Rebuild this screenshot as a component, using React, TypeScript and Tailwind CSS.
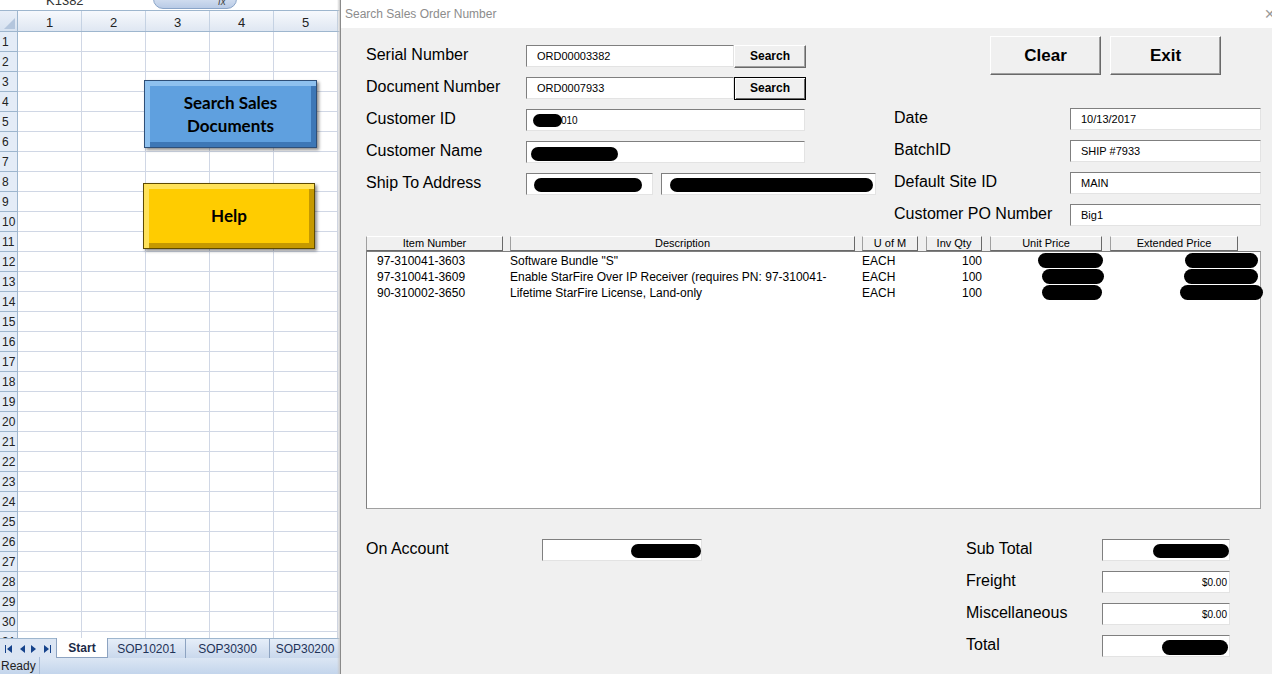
import React from "react";

const rowNums = Array.from({ length: 31 }, (_, i) => i + 1);
const colNums = [1, 2, 3, 4, 5];

// unit / ext = [left offset inside column, blob width]
const lineItems = [
  { item: "97-310041-3603", desc: 'Software Bundle "S"', uom: "EACH", qty: "100", unit: [56, 65], ext: [83, 73] },
  { item: "97-310041-3609", desc: "Enable StarFire Over IP Receiver (requires PN: 97-310041-", uom: "EACH", qty: "100", unit: [60, 62], ext: [82, 74] },
  { item: "90-310002-3650", desc: "Lifetime StarFire License, Land-only", uom: "EACH", qty: "100", unit: [60, 60], ext: [78, 83] },
];

const Blob = ({ w, h = 14, className = "", left }: { w: number; h?: number; className?: string; left?: number }) => (
  <span className={`inline-block rounded-full bg-black ${className}`} style={{ width: w, height: h, left }} />
);

const Field = ({ w, children, right }: { w: number; children?: React.ReactNode; right?: boolean }) => (
  <div
    className={`flex h-[22px] shrink-0 items-center overflow-hidden border border-t-[#7f7f7f] border-l-[#7f7f7f] border-r-[#e3e3e3] border-b-[#e3e3e3] bg-white text-[11px] text-black ${right ? "justify-end pr-[2px]" : "pl-[10px]"}`}
    style={{ width: w }}
  >
    {children}
  </div>
);

const WinButton = ({ w, h, children, focused, className = "" }: { w: number; h: number; children: React.ReactNode; focused?: boolean; className?: string }) => (
  <div
    className={`flex shrink-0 items-center justify-center bg-[#f0f0f0] font-bold text-black ${focused ? "border border-black shadow-[inset_1px_1px_0_#fff,inset_-1px_-1px_0_#696969]" : "border border-t-white border-l-white border-r-[#696969] border-b-[#696969] shadow-[inset_-1px_-1px_0_#a0a0a0]"} ${className}`}
    style={{ width: w, height: h }}
  >
    {children}
  </div>
);

const Label = ({ w, children }: { w: number; children: React.ReactNode }) => (
  <div className="shrink-0 -mt-[2px] text-[16px] text-black" style={{ width: w }}>
    {children}
  </div>
);

const ColHead = ({ w, children }: { w: number; children: React.ReactNode }) => (
  <div
    className="flex h-[15px] shrink-0 items-center justify-center border border-t-white border-l-[#a0a0a0] border-r-[#696969] border-b-[#696969] bg-[#f0f0f0] text-[11px] leading-none text-black"
    style={{ width: w }}
  >
    {children}
  </div>
);

function ExcelSide() {
  return (
    <div className="relative flex h-full w-[340px] shrink-0 flex-col bg-white font-['Liberation_Sans',sans-serif]">
      {/* formula bar, mostly scrolled off the top */}
      <div className="relative h-[11px] overflow-hidden border-b border-[#9eb6ce] bg-white">
        <span className="absolute left-[46px] -top-[9px] text-[13px] text-[#333]">K1382</span>
        <div className="absolute left-[153px] -top-[10px] h-[19px] w-[84px] rounded-b-[10px] border border-[#8ba5c8] bg-gradient-to-b from-[#e8eef8] to-[#b9cbe6]" />
        <span className="absolute left-[218px] -top-[6px] text-[10px] italic text-[#444]">fx</span>
      </div>
      {/* column header */}
      <div className="flex h-[21px] border-b border-[#9eb6ce]">
        <div className="relative w-[18px] shrink-0 border-r border-[#9eb6ce] bg-gradient-to-b from-[#e9eff8] to-[#d7e2f0]">
          <svg className="absolute bottom-[2px] right-[2px]" width="11" height="11" viewBox="0 0 11 11">
            <path d="M11 0 L11 11 L0 11 Z" fill="#b4c6dd" />
          </svg>
        </div>
        {colNums.map((c) => (
          <div key={c} className="flex w-[64px] shrink-0 items-center justify-center border-r border-[#c5d2e3] bg-gradient-to-b from-[#f7f9fd] to-[#dfe7f2] pt-[3px] text-[13px] text-[#222]">
            {c}
          </div>
        ))}
      </div>
      {/* grid */}
      <div className="relative flex-1 overflow-hidden">
        {rowNums.map((r) => (
          <div key={r} className="flex h-[20px]">
            <div className="flex w-[18px] shrink-0 items-center border-b border-r border-[#9eb6ce] bg-[#e4ecf7] pl-[2px] text-[12px] text-[#222]">
              {r}
            </div>
            {colNums.map((c) => (
              <div key={c} className="w-[64px] shrink-0 border-b border-r border-[#d0d7e5]" />
            ))}
          </div>
        ))}
        <div className="absolute left-[144px] top-[48px] flex h-[68px] w-[173px] items-center justify-center border border-[#2e4f78] bg-[#5fa0df] text-center font-['Lato',sans-serif] text-[17px] font-bold leading-[23px] text-black shadow-[inset_5px_5px_0_#8ec1ef,inset_-5px_-5px_0_#3d77b6,2px_2px_3px_rgba(0,0,0,0.45)]">
          Search Sales
          <br />
          Documents
        </div>
        <div className="absolute left-[143px] top-[151px] flex h-[66px] w-[172px] items-center justify-center border border-[#5e4a00] bg-[#ffcc00] font-['Lato',sans-serif] text-[17px] font-bold text-black shadow-[inset_5px_5px_0_#ffe25a,inset_-5px_-5px_0_#c59900,2px_2px_3px_rgba(0,0,0,0.45)]">
          Help
        </div>
      </div>
      {/* sheet tabs */}
      <div className="flex h-[20px] items-stretch border-t border-[#9eb6ce] bg-[#dbe5f3] text-[12px]">
        <div className="flex w-[56px] items-center justify-around px-[2px]">
          <svg width="7" height="8" viewBox="0 0 7 8"><path d="M0 0h1v8H0z M7 0v8L2 4z" fill="#15428b" /></svg>
          <svg width="6" height="8" viewBox="0 0 6 8"><path d="M6 0v8L1 4z" fill="#15428b" /></svg>
          <svg width="6" height="8" viewBox="0 0 6 8"><path d="M0 0v8l5-4z" fill="#15428b" /></svg>
          <svg width="7" height="8" viewBox="0 0 7 8"><path d="M0 0v8l5-4z M6 0h1v8H6z" fill="#15428b" /></svg>
        </div>
        <div className="-mt-[1px] flex w-[52px] items-center justify-center border-x border-b border-[#8da3c1] bg-white font-bold text-[#1b2a48]">
          Start
        </div>
        <div className="flex w-[78px] items-center justify-center border-r border-[#8da3c1] bg-gradient-to-b from-[#e6eef9] to-[#c9d8ec] text-[#1f3358]">SOP10201</div>
        <div className="flex w-[84px] items-center justify-center border-r border-[#8da3c1] bg-gradient-to-b from-[#e6eef9] to-[#c9d8ec] text-[#1f3358]">SOP30300</div>
        <div className="flex flex-1 items-center justify-center bg-gradient-to-b from-[#e6eef9] to-[#c9d8ec] text-[#1f3358]">SOP30200</div>
      </div>
      {/* status bar */}
      <div className="flex h-[16px] items-center bg-gradient-to-b from-[#dbe6f4] to-[#c3d5ec] text-[12px] text-[#222]">
        <span className="w-[40px] border-r border-[#a8bcd8] pl-[1px]">Ready</span>
      </div>
      <div className="absolute right-0 top-0 h-full w-[3px] bg-gradient-to-r from-[#ffffff00] to-[#c8c8c8]" />
    </div>
  );
}

function Dialog() {
  return (
    <div className="flex h-full flex-1 flex-col border-l border-[#8a8a8a] bg-[#f0f0f0] font-['Liberation_Sans',sans-serif]">
      <div className="flex h-[28px] shrink-0 items-center justify-between bg-white pl-[4px] text-[12px] text-[#8c8c8c]">
        <span className="-mt-[1px]">Search Sales Order Number</span>
        <span className="-mr-[3px] text-[14px] font-light text-[#9a9a9a]">✕</span>
      </div>
      <div className="flex flex-col pl-[25px] pr-[12px]">
        {/* header fields */}
        <div className="flex gap-[18px]">
          <div className="flex w-[510px] flex-col gap-[10px] pt-[17px]">
            <div className="flex h-[22px] items-center">
              <Label w={160}>Serial Number</Label>
              <Field w={208}>ORD00003382</Field>
              <WinButton w={72} h={23} className="text-[12px]">Search</WinButton>
            </div>
            <div className="flex h-[22px] items-center">
              <Label w={160}>Document Number</Label>
              <Field w={208}>ORD0007933</Field>
              <WinButton w={72} h={23} focused className="text-[12px]">Search</WinButton>
            </div>
            <div className="flex h-[22px] items-center">
              <Label w={160}>Customer ID</Label>
              <Field w={279}>
                <span className="-ml-[4px] flex items-center">
                  <Blob w={29} h={13} />
                  <span className="-ml-[1px] text-[10px]">010</span>
                </span>
              </Field>
            </div>
            <div className="flex h-[22px] items-center">
              <Label w={160}>Customer Name</Label>
              <Field w={279}>
                <Blob w={87} h={14} className="-ml-[6px] mt-[4px]" />
              </Field>
            </div>
            <div className="flex h-[22px] items-center gap-[8px]">
              <Label w={152}>Ship To Address</Label>
              <Field w={127}>
                <Blob w={108} h={14} className="-ml-[3px] mt-[2px]" />
              </Field>
              <Field w={215}>
                <Blob w={203} h={14} className="-ml-[2px] mt-[2px]" />
              </Field>
            </div>
          </div>
          <div className="flex w-[367px] flex-col pt-[8px]">
            <div className="flex h-[39px] gap-[9px] pl-[96px]">
              <WinButton w={111} h={39} className="text-[17px]">Clear</WinButton>
              <WinButton w={111} h={39} className="text-[17px]">Exit</WinButton>
            </div>
            <div className="mt-[33px] flex flex-col gap-[10px]">
              <div className="flex h-[22px] items-center">
                <Label w={176}>Date</Label>
                <Field w={191}>10/13/2017</Field>
              </div>
              <div className="flex h-[22px] items-center">
                <Label w={176}>BatchID</Label>
                <Field w={191}>SHIP #7933</Field>
              </div>
              <div className="flex h-[22px] items-center">
                <Label w={176}>Default Site ID</Label>
                <Field w={191}>MAIN</Field>
              </div>
              <div className="flex h-[22px] items-center">
                <Label w={176}>Customer PO Number</Label>
                <Field w={191}>Big1</Field>
              </div>
            </div>
          </div>
        </div>

        {/* line items list */}
        <div className="mt-[10px] flex">
          <ColHead w={137}>Item Number</ColHead>
          <div className="w-[7px]" />
          <ColHead w={345}>Description</ColHead>
          <div className="w-[7px]" />
          <ColHead w={56}>U of M</ColHead>
          <div className="w-[8px]" />
          <ColHead w={56}>Inv Qty</ColHead>
          <div className="w-[8px]" />
          <ColHead w={112}>Unit Price</ColHead>
          <div className="w-[8px]" />
          <ColHead w={128}>Extended Price</ColHead>
        </div>
        <div className="h-[258px] border border-t-[#7f7f7f] border-l-[#7f7f7f] border-r-[#a0a0a0] border-b-[#a0a0a0] bg-white pt-[1px] text-[12px] text-black">
          {lineItems.map((li) => (
            <div key={li.item} className="flex h-[16px] items-center whitespace-nowrap">
              <span className="w-[143px] shrink-0 pl-[10px]">{li.item}</span>
              <span className="w-[352px] shrink-0 overflow-hidden">{li.desc}</span>
              <span className="w-[64px] shrink-0">{li.uom}</span>
              <span className="w-[56px] shrink-0 text-right">{li.qty}</span>
              <span className="relative w-[120px] shrink-0">
                <Blob w={li.unit[1]} h={15} left={li.unit[0]} className="absolute -top-[8px]" />
              </span>
              <span className="relative flex-1">
                <Blob w={li.ext[1]} h={15} left={li.ext[0]} className="absolute -top-[8px]" />
              </span>
            </div>
          ))}
        </div>

        {/* totals */}
        <div className="mt-[30px] flex">
          <div className="flex h-[22px] w-[600px] items-center">
            <Label w={176}>On Account</Label>
            <Field w={160}>
              <Blob w={71} h={14} className="ml-[78px] mt-[1px]" />
            </Field>
          </div>
          <div className="flex flex-col gap-[10px]">
            <div className="flex h-[22px] items-center">
              <Label w={136}>Sub Total</Label>
              <Field w={128}>
                <Blob w={78} h={14} className="ml-[40px] mt-[1px]" />
              </Field>
            </div>
            <div className="flex h-[22px] items-center">
              <Label w={136}>Freight</Label>
              <Field w={128} right>
                <span className="text-[10px]">$0.00</span>
              </Field>
            </div>
            <div className="flex h-[22px] items-center">
              <Label w={136}>Miscellaneous</Label>
              <Field w={128} right>
                <span className="text-[10px]">$0.00</span>
              </Field>
            </div>
            <div className="flex h-[22px] items-center">
              <Label w={136}>Total</Label>
              <Field w={128}>
                <Blob w={66} h={15} className="ml-[49px] mt-[3px]" />
              </Field>
            </div>
          </div>
        </div>
      </div>
    </div>
  );
}

export default function App() {
  return (
    <div className="flex h-[674px] w-[1272px] overflow-hidden bg-white">
      <ExcelSide />
      <Dialog />
    </div>
  );
}
